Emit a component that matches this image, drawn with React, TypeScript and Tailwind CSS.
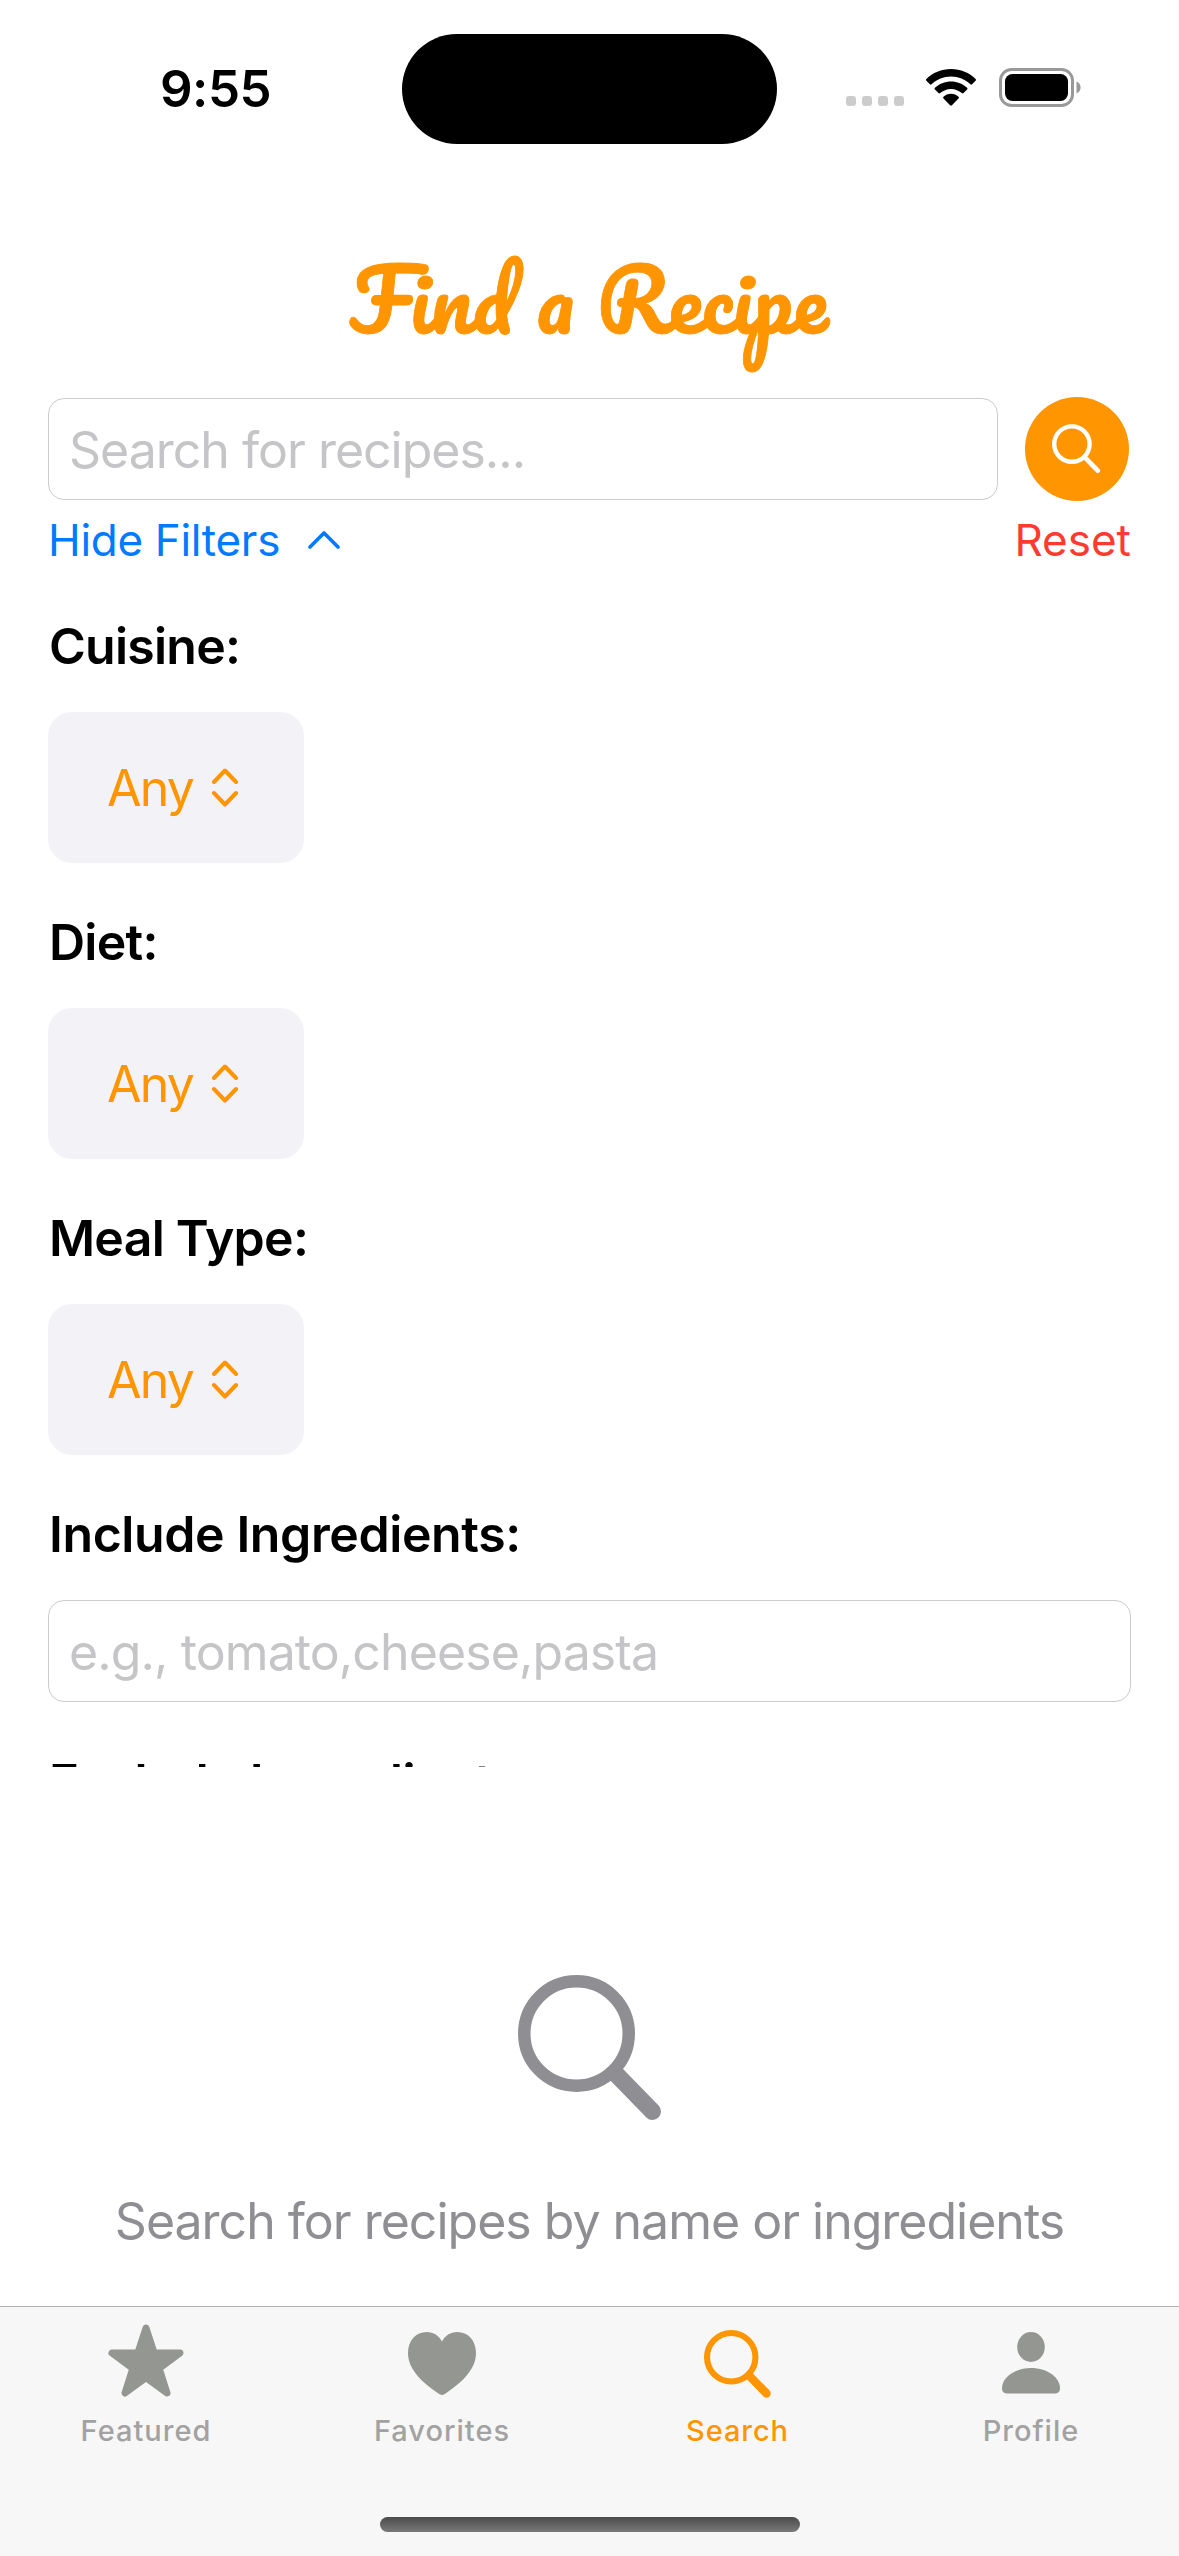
import React from "react";

function SearchIcon({ className, stroke, handle }: { className: string; stroke: number; handle: number }) {
  return (
    <svg viewBox="0 0 144 146" className={className} fill="none" stroke="currentColor" strokeLinecap="round">
      <circle cx="58.5" cy="58.5" r={58.5 - stroke / 2} strokeWidth={stroke} />
      <path d="M98 99 L134.5 136.5" strokeWidth={handle} />
    </svg>
  );
}

function StatusBar() {
  return (
    <div className="flex h-[177px] shrink-0 items-start pt-[34px]">
      <div className="flex h-[110px] w-[402px] items-center pl-[160px]">
        <span className="text-[51px] font-semibold leading-[60px] tracking-[-0.5px]">9:55</span>
      </div>
      <div className="h-[110px] w-[375px] rounded-full bg-black" />
      <div className="flex h-[110px] flex-1 pl-[69px] pt-[34px]">
        <div className="mt-[28px] flex h-[10px] w-[58px] justify-between">
          {[0, 1, 2, 3].map((i) => (
            <span key={i} className="h-[10px] w-[10px] rounded-[3px] bg-[#cccccc]" />
          ))}
        </div>
        <svg viewBox="0 0 50 37" className="ml-[22px] mt-px h-[37px] w-[50px]">
          <path d="M25 0C34.6 0 43.4 3.8 49.6 10c.5.5.5 1.2 0 1.7l-3.5 3.6c-.5.5-1.200.5-1.700 0C39.300 10.400 32.500 7.500 25 7.500S10.700 10.400 5.600 15.300c-.5.5-1.200.5-1.700 0L.4 11.700c-.5-.5-.5-1.200 0-1.700C6.600 3.800 15.400 0 25 0Z" />
          <path d="M25 12.400c6.200 0 11.900 2.400 16.100 6.400.5.5.5 1.200 0 1.700l-3.600 3.600c-.5.5-1.200.5-1.700 0-2.800-2.600-6.600-4.200-10.800-4.200s-8 1.600-10.800 4.200c-.5.5-1.200.5-1.700 0l-3.600-3.600c-.5-.5-.5-1.200 0-1.700 4.200-4 9.900-6.400 16.100-6.400Z" />
          <path d="M25 24.800c2.900 0 5.500 1.100 7.500 2.900.5.5.5 1.200 0 1.700l-6.600 6.900c-.5.5-1.300.5-1.800 0l-6.600-6.900c-.5-.5-.5-1.200 0-1.700 2-1.800 4.600-2.900 7.500-2.900Z" />
        </svg>
        <svg viewBox="0 0 82 39" className="ml-[23px] h-[39px] w-[82px]">
          <rect x="1.500" y="1.500" width="72" height="36" rx="11" fill="none" stroke="#999999" strokeWidth="3" />
          <rect x="6" y="6" width="63" height="27" rx="7.500" />
          <path d="M77.500 13.500c2.500.9 4.100 3.300 4.100 6s-1.600 5.100-4.100 6Z" fill="#999999" />
        </svg>
      </div>
    </div>
  );
}

function Picker({ label }: { label: string }) {
  return (
    <section className="mb-[49px] flex flex-col items-start">
      <h2 className="pl-px text-[50px] font-semibold leading-[60px] tracking-[-0.75px]">{label}</h2>
      <button className="mt-9 flex h-[151px] w-[256px] items-center rounded-[24px] bg-[#f2f2f7] pl-[59px] text-[#ff9500]">
        <span className="w-[104px] text-left text-[50px] leading-[60px] tracking-[-1.8px]">Any</span>
        <svg viewBox="0 0 28 40" className="mb-px h-10 w-7" fill="none" stroke="currentColor" strokeWidth="4" strokeLinecap="round" strokeLinejoin="round">
          <path d="M3 15 L14 3.500 L25 15 M3 26 L14 37.500 L25 26" />
        </svg>
      </button>
    </section>
  );
}

function Tab({ label, active, children }: { label: string; active?: boolean; children: React.ReactNode }) {
  return (
    <div className={active ? "flex w-[295px] flex-col items-center text-[#ff9500]" : "flex w-[295px] flex-col items-center text-[#949692] first:pr-[2px] last:pr-[2px]"}>
      <div className="flex h-[76px] items-center justify-center">{children}</div>
      <span className={active ? "mt-[15px] pl-px text-[29px] font-medium leading-9 tracking-[0.9px]" : "mt-[15px] text-[29px] font-medium leading-9 tracking-[1px] text-[#a2a2a2]"}>
        {label}
      </span>
    </div>
  );
}

export default function App() {
  return (
    <div className="flex h-[2556px] w-[1179px] flex-col overflow-hidden bg-white font-['Inter',sans-serif] text-black">
      <StatusBar />

      <h1 className="mt-[56px] h-[164px] shrink-0 pr-px text-center font-[Pacifico,cursive] text-[84px] font-normal leading-[132px] text-[#ff9500] [-webkit-text-stroke:0.8px_#ff9500]">
        Find a Recipe
      </h1>

      <div className="flex h-[105px] shrink-0 items-start justify-between pl-12 pr-[50.5px]">
        <div className="mt-px flex h-[102px] w-[950px] items-center rounded-[16px] border border-[#cbcbcb] pl-[20px] text-[50px] leading-[60px] tracking-[-1px] text-[#c5c5c7]">
          <span className="pt-px">Search for recipes...</span>
        </div>
        <button className="flex h-[104px] w-[104px] items-center justify-center rounded-full bg-[#ff9500] text-white">
          <SearchIcon className="h-[50px] w-[49px]" stroke={13} handle={14} />
        </button>
      </div>

      <div className="mt-[8px] flex h-[60px] shrink-0 items-center justify-between pl-12 pr-12 text-[44px] leading-[60px]">
        <div className="flex items-center text-[#007aff]">
          <span className="w-[232px] whitespace-nowrap tracking-[-0.3px]">Hide Filters</span>
          <svg viewBox="0 0 32 18" className="ml-[28px] h-[18px] w-8" fill="none" stroke="currentColor" strokeWidth="3.600" strokeLinecap="round" strokeLinejoin="round">
            <path d="M2 16 L16 2 L30 16" />
          </svg>
        </div>
        <span className="text-[#ff3b30]">Reset</span>
      </div>

      <main className="mt-[46px] h-[1151px] shrink-0 overflow-hidden px-12">
        <Picker label="Cuisine:" />
        <Picker label="Diet:" />
        <Picker label="Meal Type:" />
        <h2 className="pl-px text-[50px] font-semibold leading-[60px] tracking-[-0.4px]">Include Ingredients:</h2>
        <div className="mt-9 flex h-[102px] items-center rounded-[16px] border border-[#cbcbcb] pl-[20px] text-[50px] leading-[60px] tracking-[-0.9px] text-[#c5c5c7]">
          <span className="pt-px">e.g., tomato,cheese,pasta</span>
        </div>
        <h2 className="mt-[50px] pl-px text-[50px] font-semibold leading-[60px] tracking-[-0.4px]">Exclude Ingredients:</h2>
      </main>

      <div className="mt-[208px] flex shrink-0 flex-col items-center text-[#8e8e93]">
        <SearchIcon className="h-[146px] w-[144px]" stroke={12.5} handle={17} />
        <p className="mt-[70px] whitespace-nowrap text-[50px] leading-[60px] tracking-[-1px]">Search for recipes by name or ingredients</p>
      </div>

      <nav className="mt-[55px] flex h-[250px] shrink-0 flex-col items-center border-t border-[#b2b2b2] bg-[#f7f7f7]">
        <div className="flex h-[210px] pt-[15px]">
          <Tab label="Featured">
            <svg viewBox="0 0 76 73" className="h-[73px] w-[76px]" fill="currentColor" stroke="currentColor" strokeWidth="7" strokeLinejoin="round">
              <path d="M38 4 L46.200 29 H72 L51.200 44.500 L59 69 L38 53.700 L17 69 L24.800 44.500 L4 29 H29.800 Z" />
            </svg>
          </Tab>
          <Tab label="Favorites">
            <svg viewBox="0 0 68 63" className="mt-[6px] h-[63px] w-[68px]" fill="currentColor">
              <path d="M34 63C32.500 63 31 61.800 29 60.500C12 49 0 36 0 21C0 8.500 8 0 18.700 0C25.500 0 31 3.800 34 9.500C37 3.800 42.500 0 49.300 0C60 0 68 8.500 68 21C68 36 56 49 39 60.500C37 61.800 35.500 63 34 63Z" />
            </svg>
          </Tab>
          <Tab label="Search" active>
            <SearchIcon className="mt-[8px] h-[68px] w-[67px]" stroke={13} handle={18} />
          </Tab>
          <Tab label="Profile">
            <svg viewBox="0 0 58 62" className="mt-[6px] h-[62px] w-[58px]" fill="currentColor">
              <ellipse cx="29" cy="15" rx="13.800" ry="15" />
              <path d="M0 56C0 46 12 36 29 36S58 46 58 56C58 60 56 61.500 52.500 61.500H5.500C2 61.500 0 60 0 56Z" />
            </svg>
          </Tab>
        </div>
        <div className="h-[15px] w-[420px] rounded-full bg-linear-to-b from-[#4b4b4b] to-[#7a7a7a]" />
      </nav>
    </div>
  );
}
